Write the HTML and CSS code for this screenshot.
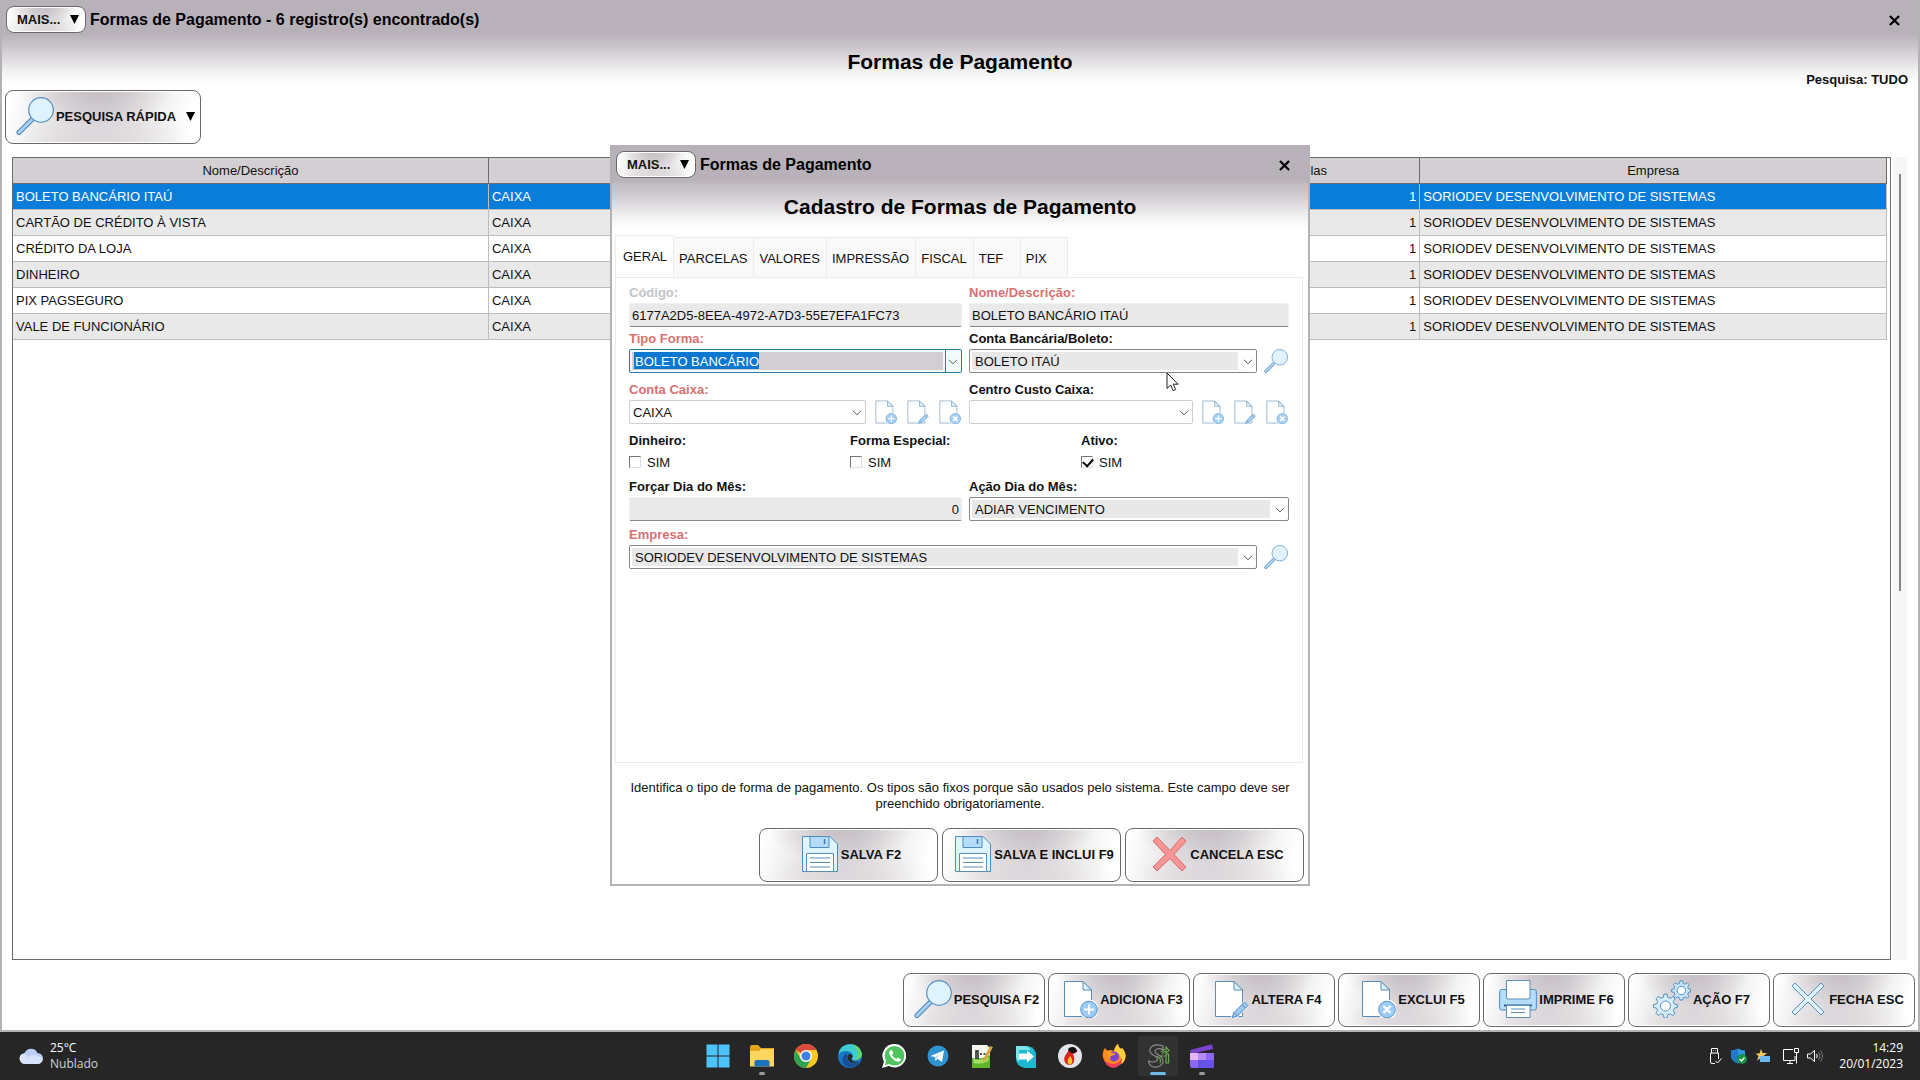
FILE: index.html
```
<!DOCTYPE html>
<html lang="pt-BR">
<head>
  <meta charset="UTF-8" />
  <meta name="viewport" content="width=device-width, initial-scale=1.0" />
  <title>Formas de Pagamento</title>
  <link rel="stylesheet" href="styles.css">
</head>
<body>
  <!-- Icons -->
  <svg class="sprite" aria-hidden="true">
    <symbol id="i-search" viewBox="0 0 38 38">
      <path d="M16.5 22 3 35.500" stroke="#4f86b8" stroke-width="5" stroke-linecap="round"/>
      <path d="M16.500 22 3 35.500" stroke="#a6d0f7" stroke-width="3" stroke-linecap="round"/>
      <circle cx="25" cy="13" r="12.300" fill="#def3fe" stroke="#5590c4" stroke-width="1.200"/>
    </symbol>
    <symbol id="i-doc" viewBox="0 0 38 38">
      <path d="M4.500 1.500H23L31.500 10V36.500H4.500Z" fill="#fff" stroke="#5c8db5"/>
      <path d="M23 1.500V10h8.500Z" fill="#d8f1fd" stroke="#5c8db5"/>
    </symbol>
    <symbol id="i-add" viewBox="0 0 38 38">
      <use href="#i-doc"/>
      <circle cx="29" cy="29.500" r="10" fill="#fff"/>
      <circle cx="29" cy="29.500" r="8.300" fill="#9cccf6" stroke="#5a94c8"/>
      <path d="M29 24.500v10M24 29.500h10" stroke="#fff" stroke-width="2"/>
    </symbol>
    <symbol id="i-edit" viewBox="0 0 38 38">
      <use href="#i-doc"/>
      <path d="M19 39 22 32 33 21 38 26 27 37Z" fill="#fff"/>
      <path d="M21 37.500 23 32.500 33.500 22 37 25.500 26.500 36ZM31 24.500l3.500 3.500M23 32.500l3.500 3.500" fill="#9cccf6" stroke="#4f86b8"/>
    </symbol>
    <symbol id="i-del" viewBox="0 0 38 38">
      <use href="#i-doc"/>
      <circle cx="29" cy="29.500" r="10" fill="#fff"/>
      <circle cx="29" cy="29.500" r="8.300" fill="#9cccf6" stroke="#5a94c8"/>
      <path d="m25.500 26 7 7m0-7-7 7" stroke="#fff" stroke-width="2.400"/>
    </symbol>
    <symbol id="i-print" viewBox="0 0 38 38">
      <rect x=".6" y="9.500" width="36.800" height="20.500" rx="2" fill="#b4dcfb" stroke="#4f8cc4"/>
      <path d="M7.500.500h23.500V17q0 2-2 2H9.500q-2 0-2-2Z" fill="#fff" stroke="#5c8db5"/>
      <path d="M5 25.500h28" stroke="#2f5f8f" stroke-width="2"/>
      <path d="M7.500 25.500h23.500v12H7.500Z" fill="#fff" stroke="#5c8db5"/>
      <path d="M12 29h14M12 32.500h14" stroke="#5c8db5"/>
    </symbol>
    <symbol id="i-gears" viewBox="0 0 38 38">
      <g fill="#d8eefc" stroke="#5590c4">
        <path d="M11 14h3l.6 3.200 2.600 1.100 2.700-1.800 2.200 2.200-1.800 2.700 1.100 2.600 3 .5v3l-3 .6-1.100 2.600 1.800 2.700-2.200 2.100-2.700-1.700-2.600 1-.6 3.200h-3l-.6-3.200-2.600-1-2.700 1.700-2.100-2.100 1.700-2.700-1.100-2.600-3.100-.6v-3l3.100-.5 1.100-2.600-1.700-2.700L5.100 16.500l2.700 1.800 2.600-1.100Z"/>
        <circle cx="12.500" cy="26" r="5" fill="#fff"/>
        <path d="M27 .8h2.600l.5 2.500 2 .9 2.200-1.400 1.800 1.800-1.400 2.200.9 2 1.900.5v2.500l-1.900.5-.9 2 1.400 2.200-1.800 1.800-2.200-1.400-2 .9-.5 2.300H27l-.5-2.300-2-.9-2.200 1.400-1.800-1.800 1.400-2.200-.9-2-2.400-.5V9.300l2.400-.5.9-2-1.400-2.200 1.800-1.800 2.200 1.400 2-.9Z" fill="#c6e4fb"/>
        <circle cx="28.300" cy="10.500" r="4.200" fill="#fff"/>
      </g>
    </symbol>
    <symbol id="i-close" viewBox="0 0 38 38">
      <path d="M3 6 6 3 19 16 32 3l3 3L22 19 35 32l-3 3L19 22 6 35l-3-3L16 19Z" fill="#def3fe" stroke="#5590c4"/>
    </symbol>
    <symbol id="i-cancel" viewBox="0 0 38 38">
      <path d="M3 6 7 2 20 15.500 32 2l4 4L24 19.500 36 32l-4 4L20 23.500 7 36l-4-4L15.500 19.500Z" fill="#fb9494" stroke="#d96a6a"/>
    </symbol>
    <symbol id="i-save" viewBox="0 0 38 38">
      <path d="M1.500 1.500H29L36.500 9V36.500h-35Z" fill="#def4ff" stroke="#4f8cc4"/>
      <path d="M9 1.500h19v11H9Z" fill="#b4dcfb" stroke="#4f8cc4"/>
      <path d="M23.500 4v5" stroke="#3f78b0" stroke-width="1.500"/>
      <path d="M5.500 18.500h27v18h-27Z" fill="#fff" stroke="#5c8db5"/>
      <path d="M9 23h20M9 27.500h20M9 32h20" stroke="#5c8db5"/>
    </symbol>
    <symbol id="i-x" viewBox="0 0 12 12">
      <path d="m1 1 10 10M11 1 1 11" stroke="#000" stroke-width="2.400"/>
    </symbol>
    <symbol id="i-down" viewBox="0 0 10 10">
      <path d="M0 0h10L5 10Z" fill="#000"/>
    </symbol>
    <symbol id="i-chevron" viewBox="0 0 10 6">
      <path d="m1 .8 4 4 4-4" fill="none" stroke="#555"/>
    </symbol>
  </svg>

  <main class="window">
    <header class="titlebar">
      <button class="btn more" type="button">MAIS...<svg class="arrow"><use href="#i-down"/></svg></button>
      <span class="caption">Formas de Pagamento - 6 registro(s) encontrado(s)</span>
      <button class="close" type="button" aria-label="Fechar"><svg><use href="#i-x"/></svg></button>
    </header>
    <div class="heading">
      <h1>Formas de Pagamento</h1>
      <span class="filter">Pesquisa: TUDO</span>
    </div>

    <div class="quick">
      <button class="btn big" type="button"><svg class="icon"><use href="#i-search"/></svg>PESQUISA RÁPIDA<svg class="arrow"><use href="#i-down"/></svg></button>
    </div>

    <section class="list">
      <div class="grid-box">
        <table>
          <colgroup><col class="c-name"><col class="c-account"><col class="c-parts"><col></colgroup>
          <thead>
            <tr><th>Nome/Descrição</th><th></th><th>Parcelas</th><th>Empresa</th></tr>
          </thead>
          <tbody>
            <tr class="selected"><td>BOLETO BANCÁRIO ITAÚ</td><td>CAIXA</td><td class="num">1</td><td>SORIODEV DESENVOLVIMENTO DE SISTEMAS</td></tr>
            <tr><td>CARTÃO DE CRÉDITO À VISTA</td><td>CAIXA</td><td class="num">1</td><td>SORIODEV DESENVOLVIMENTO DE SISTEMAS</td></tr>
            <tr><td>CRÉDITO DA LOJA</td><td>CAIXA</td><td class="num">1</td><td>SORIODEV DESENVOLVIMENTO DE SISTEMAS</td></tr>
            <tr><td>DINHEIRO</td><td>CAIXA</td><td class="num">1</td><td>SORIODEV DESENVOLVIMENTO DE SISTEMAS</td></tr>
            <tr><td>PIX PAGSEGURO</td><td>CAIXA</td><td class="num">1</td><td>SORIODEV DESENVOLVIMENTO DE SISTEMAS</td></tr>
            <tr><td>VALE DE FUNCIONÁRIO</td><td>CAIXA</td><td class="num">1</td><td>SORIODEV DESENVOLVIMENTO DE SISTEMAS</td></tr>
          </tbody>
        </table>
      </div>
      <div class="scroll"><div class="thumb"></div></div>
    </section>

    <footer class="actions">
      <button class="btn big" type="button"><svg class="icon"><use href="#i-search"/></svg>PESQUISA F2</button>
      <button class="btn big" type="button"><svg class="icon"><use href="#i-add"/></svg>ADICIONA F3</button>
      <button class="btn big" type="button"><svg class="icon"><use href="#i-edit"/></svg>ALTERA F4</button>
      <button class="btn big" type="button"><svg class="icon"><use href="#i-del"/></svg>EXCLUI F5</button>
      <button class="btn big" type="button"><svg class="icon"><use href="#i-print"/></svg>IMPRIME F6</button>
      <button class="btn big" type="button"><svg class="icon"><use href="#i-gears"/></svg>AÇÃO F7</button>
      <button class="btn big" type="button"><svg class="icon"><use href="#i-close"/></svg>FECHA ESC</button>
    </footer>

    <!-- Cadastro -->
    <div class="overlay">
      <div class="modal" role="dialog" aria-labelledby="modalTitle">
        <header class="titlebar">
          <button class="btn more" type="button">MAIS...<svg class="arrow"><use href="#i-down"/></svg></button>
          <span class="caption">Formas de Pagamento</span>
          <button class="close" type="button" aria-label="Fechar"><svg><use href="#i-x"/></svg></button>
        </header>
        <h2 id="modalTitle">Cadastro de Formas de Pagamento</h2>

        <div class="tabs" role="tablist">
          <button class="tab active" type="button" role="tab" aria-selected="true">GERAL</button>
          <button class="tab" type="button" role="tab">PARCELAS</button>
          <button class="tab" type="button" role="tab">VALORES</button>
          <button class="tab" type="button" role="tab">IMPRESSÃO</button>
          <button class="tab" type="button" role="tab">FISCAL</button>
          <button class="tab" type="button" role="tab">TEF</button>
          <button class="tab" type="button" role="tab">PIX</button>
        </div>

        <form class="panel">
          <div class="row tight">
            <div class="field">
              <label class="off" for="codigo">Código:</label>
              <input class="text" id="codigo" type="text" value="6177A2D5-8EEA-4972-A7D3-55E7EFA1FC73" readonly>
            </div>
            <div class="field">
              <label class="req" for="nome">Nome/Descrição:</label>
              <input class="text" id="nome" type="text" value="BOLETO BANCÁRIO ITAÚ">
            </div>
          </div>
          <div class="row">
            <div class="field">
              <label class="req" for="tipo">Tipo Forma:</label>
              <div class="combo current">
                <select id="tipo"><option>BOLETO BANCÁRIO</option></select>
                <svg><use href="#i-chevron"/></svg>
              </div>
            </div>
            <div class="field">
              <label for="boleto">Conta Bancária/Boleto:</label>
              <div class="line">
                <div class="combo">
                  <select id="boleto"><option>BOLETO ITAÚ</option></select>
                  <svg><use href="#i-chevron"/></svg>
                </div>
                <button class="mini" type="button" aria-label="Pesquisar"><svg><use href="#i-search"/></svg></button>
              </div>
            </div>
          </div>
          <div class="row">
            <div class="field">
              <label class="req" for="caixa">Conta Caixa:</label>
              <div class="line">
                <div class="combo plain">
                  <select id="caixa"><option>CAIXA</option></select>
                  <svg><use href="#i-chevron"/></svg>
                </div>
                <button class="mini" type="button" aria-label="Adicionar"><svg><use href="#i-add"/></svg></button>
                <button class="mini" type="button" aria-label="Alterar"><svg><use href="#i-edit"/></svg></button>
                <button class="mini" type="button" aria-label="Excluir"><svg><use href="#i-del"/></svg></button>
              </div>
            </div>
            <div class="field">
              <label for="centro">Centro Custo Caixa:</label>
              <div class="line">
                <div class="combo plain">
                  <select id="centro"><option></option></select>
                  <svg><use href="#i-chevron"/></svg>
                </div>
                <button class="mini" type="button" aria-label="Adicionar"><svg><use href="#i-add"/></svg></button>
                <button class="mini" type="button" aria-label="Alterar"><svg><use href="#i-edit"/></svg></button>
                <button class="mini" type="button" aria-label="Excluir"><svg><use href="#i-del"/></svg></button>
              </div>
            </div>
          </div>
          <div class="row mid checks">
            <div class="field">
              <span class="label">Dinheiro:</span>
              <label class="check"><input type="checkbox">SIM</label>
            </div>
            <div class="field">
              <span class="label">Forma Especial:</span>
              <label class="check"><input type="checkbox">SIM</label>
            </div>
            <div class="field">
              <span class="label">Ativo:</span>
              <label class="check"><input type="checkbox" checked>SIM</label>
            </div>
          </div>
          <div class="row mid">
            <div class="field">
              <label for="dia">Forçar Dia do Mês:</label>
              <input class="text num" id="dia" type="text" value="0">
            </div>
            <div class="field">
              <label for="acao">Ação Dia do Mês:</label>
              <div class="combo">
                <select id="acao"><option>ADIAR VENCIMENTO</option></select>
                <svg><use href="#i-chevron"/></svg>
              </div>
            </div>
          </div>
          <div class="field">
            <label class="req" for="empresa">Empresa:</label>
            <div class="line">
              <div class="combo">
                <select id="empresa"><option>SORIODEV DESENVOLVIMENTO DE SISTEMAS</option></select>
                <svg><use href="#i-chevron"/></svg>
              </div>
              <button class="mini" type="button" aria-label="Pesquisar"><svg><use href="#i-search"/></svg></button>
            </div>
          </div>
        </form>

        <p class="hint">Identifica o tipo de forma de pagamento. Os tipos são fixos porque são usados pelo sistema. Este campo deve ser preenchido obrigatoriamente.</p>

        <div class="modal-actions">
          <button class="btn big" type="button"><svg class="icon"><use href="#i-save"/></svg>SALVA F2</button>
          <button class="btn big" type="button"><svg class="icon"><use href="#i-save"/></svg>SALVA E INCLUI F9</button>
          <button class="btn big" type="button"><svg class="icon"><use href="#i-cancel"/></svg>CANCELA ESC</button>
        </div>

        <svg class="cursor" viewBox="0 0 13 20"><path d="M1 1v15.500l3.700-3.400 2.400 5.600 2.500-1.100-2.400-5.400h4.900Z" fill="#fff" stroke="#222"/></svg>
      </div>
    </div>
  </main>

  <!-- Barra de tarefas -->
  <div class="taskbar">
    <div class="weather">
      <svg viewBox="0 0 24 24">
        <path d="M6 20a5.500 5.500 0 0 1-.5-10.900A7 7 0 0 1 18.500 9 5.500 5.500 0 0 1 18.500 20Z" fill="#b9cdf5"/>
        <path d="M6 20a5.500 5.500 0 0 1-3.500-9.700q4-1 7 3 4-4 9-1 4 0 5 3a5.500 5.500 0 0 1-5 4.700Z" fill="#d6e3fb"/>
      </svg>
      <div><div>25°C</div><div class="dim">Nublado</div></div>
    </div>
    <div class="apps">
      <div class="app">
        <svg viewBox="0 0 24 24"><path d="M.5.5h11v11H.5Zm12 0h11v11h-11ZM.5 12.500h11v11H.5Zm12 0h11v11h-11Z" fill="#4cc3fb"/></svg>
      </div>
      <div class="app open">
        <svg viewBox="0 0 24 24">
          <path d="M0 3q0-2 2-2h6l3 3h13v17H0Z" fill="#e3a41c"/>
          <path d="M0 7h9l2-2h13v17.500H0Z" fill="#fcd660"/>
          <path d="M4.500 22.500V18q0-2 2-2h11q2 0 2 2v4.500Z" fill="#1c72b8"/>
        </svg>
      </div>
      <div class="app">
        <svg viewBox="0 0 24 24">
          <circle cx="12" cy="12" r="12" fill="#fbc926"/>
          <path d="M12 12 1.600 6A12 12 0 0 1 22.400 6H12Z" fill="#dc4a3c"/>
          <path d="M1.600 6A12 12 0 0 0 12 24l5.200-9H6.800Z" fill="#30a352"/>
          <circle cx="12" cy="12" r="6" fill="#fff"/>
          <circle cx="12" cy="12" r="4.500" fill="#3f7fe8"/>
        </svg>
      </div>
      <div class="app">
        <svg viewBox="0 0 24 24">
          <circle cx="12" cy="12" r="12" fill="#1b76c8"/>
          <path d="M1 8C4-2 20-3 23.500 9c1 5-3 7-7 7-3 0-3-1-2-2.500C16 10 12 7 8 7c-3 0-6 1-7 3Z" fill="#3fcbd0"/>
          <path d="M14 .2c6 1 9 4.800 9.800 9.500.5 4.300-3.300 6.300-7.300 6.300 5-3 4-12-2.500-15.800Z" fill="#62d66c"/>
          <path d="M9 13c0 6 7 9 13 5.500C18 25 8 25 5 19c-1.500-4 0-8 4-9.500Z" fill="#164f93"/>
          <path d="M14 14c-2 3 3 5.500 8.500 3.500C17 21.500 9.500 19 9.500 13c0-2 2-3.500 3.500-3 1.500.6 2 2.500 1 4Z" fill="#262626"/>
        </svg>
      </div>
      <div class="app">
        <svg viewBox="0 0 24 24">
          <path d="M12.500 0A11.700 11.700 0 0 1 12.500 23.500a12 12 0 0 1-5.700-1.500L0 24l2-6.500A11.700 11.700 0 0 1 12.500 0Z" fill="#fff"/>
          <circle cx="12.500" cy="11.700" r="9.800" fill="#4fc45c"/>
          <path d="m2.800 21.200 1.500-5 3.500 3.500Z" fill="#4fc45c"/>
          <path d="M8.500 6.300c-2 1.300-1.500 4.200.5 6.700s5 5 7.500 4.700c1.500-.2 2.500-1.500 2.300-2.700l-2.900-1.600-1.500 1.600c-2-.8-3.500-2.300-4.400-4.200l1.300-1.500L10 6.200Z" fill="#fff"/>
        </svg>
      </div>
      <div class="app">
        <svg viewBox="0 0 24 24">
          <circle cx="12" cy="12" r="10.500" fill="#2f93cf"/>
          <path d="m4.500 12 13.500-5.500-2 11.500-4.500-3.200-2.300 2.200-.4-4Z" fill="#fff"/>
          <path d="m8.800 13 6.500-4.300-4.800 5.300-1.300 3Z" fill="#b8d8ec"/>
        </svg>
      </div>
      <div class="app">
        <svg viewBox="0 0 24 24">
          <path d="M2 1h15l3 3v20H2Z" fill="#f2f6ec"/>
          <path d="M2 14q9 2 18-3v13H2Z" fill="#5fb52c"/>
          <path d="M3.500 15q8 2 15-2v4q-8 4-15 2Z" fill="#a5de62"/>
          <path d="M6 15V7h2v8m2-5h2m1.500 0h2" fill="none" stroke="#222" stroke-width="1.500"/>
          <path d="m13 16 7-14 3 1-7 13-3.500 2Z" fill="#d9a43a"/>
        </svg>
      </div>
      <div class="app">
        <svg viewBox="0 0 24 24">
          <path d="M2 2h12q8 2 8 9v13H11q-9-2-9-9Z" fill="#1cb9cf"/>
          <path d="M2 2h9q3 0 6 4H5v12q-3-2-3-5Z" fill="#7ee4ea"/>
          <path d="M5 9.500h8V6.500l7 6-7 6V15.500H5Z" fill="#fff"/>
        </svg>
      </div>
      <div class="app">
        <svg viewBox="0 0 24 24">
          <circle cx="12" cy="12" r="12" fill="#e2e6ea"/>
          <path d="M11 5c3-3 8-1 8 3l-4 2c2 4 2 10-3 11-5 0-7-5-5-9 1-2 3-4 4-7Z" fill="#d9261c"/>
          <path d="M10 5.500C12 2 18 2.500 18.500 6l1 1-3 2c-3 1-5-1-6.500-3.500Z" fill="#111"/>
          <path d="M12 12c3 3 3 8 0 8.500-3 0-3.500-4 0-8.500Z" fill="#fcc32c"/>
        </svg>
      </div>
      <div class="app">
        <svg viewBox="0 0 24 24">
          <path d="M3 4l2 2.500L9 6l3 1q1-5 4-7 0 3 3 5l1-1q4 4 3.500 9.500A11.500 11.500 0 0 1 1 13Q0 8 3 4Z" fill="#ff8a1e"/>
          <path d="M16 0q0 3 3 5l1-1q4 4 3.500 9.500-.8 4-3.500 6.500 1-9-8-13Q13 2 16 0Z" fill="#ffcf3a"/>
          <path d="M1 13q2 7 11 7 6-1 8-6-.5 9-8.500 10Q3 23 1 13Z" fill="#f43e5c"/>
          <circle cx="12" cy="12.500" r="5" fill="#7a45d0"/>
          <path d="M5 8q3-1 5 1 2 .5 4 0-2 3-5 3-2 2 0 4-4-2-4-8Z" fill="#ff9d22"/>
        </svg>
      </div>
      <div class="app active">
        <svg viewBox="0 0 24 24" fill="none">
          <path d="M17 2Q8-1 4.500 4 2 9 9 12q4 2 1.500 5Q7 19 2.500 17q1 7 9 6 8-3 4.500-9-1-2-5-4-4-3 0-5 3-1 6 1Z" stroke="#8a8d8a" stroke-width="1.200"/>
          <path d="M11 12q5 3 3 7M14 12h6v7M15 8q3-3 5-3V3l3 3.500L20 9V7q-2 0-4 3M20 19v-9h2.500v9Z" stroke="#69a84c" stroke-width="1.200"/>
        </svg>
      </div>
      <div class="app open">
        <svg viewBox="0 0 24 24">
          <path d="M0 6 21 .5q1.500 0 1.500 1.500l.5 3L1 10Z" fill="#7a44cf"/>
          <path d="M0 9h24v12.500q0 2.500-2 2.500H2q-2 0-2-2.500Z" fill="#8d68f2"/>
          <path d="M0 9h8v7H0Z" fill="#e3b5fb"/><path d="M8 9h8v7H8Z" fill="#b78bf8"/>
          <path d="M8 16h16v5.500q0 2.500-2 2.500H8Z" fill="#6653e6"/>
        </svg>
      </div>
    </div>
    <div class="tray">
      <svg viewBox="0 0 16 16" fill="none" stroke="#fff"><path d="M4.500 5V.5h6V5M6.500 2.500h.5M8 2.500h.5M8 15.500H5q-1.500 0-1.500-1.500V5h8v6M8.500 13l2 2 4-4.500"/></svg>
      <svg viewBox="0 0 16 16">
        <path d="M7 .5q3 2 7 2V8q0 5-7 7.500Q0 13 0 8V2.500q4 0 7-2Z" fill="#2d9ae0"/>
        <path d="M7 .5V15.500Q0 13 0 8V2.500q4 0 7-2Z" fill="#2078c8"/>
        <circle cx="11" cy="11" r="5" fill="#189044"/>
        <path d="m8.500 11 2 2 3-3.500" fill="none" stroke="#fff" stroke-width="1.300"/>
      </svg>
      <svg viewBox="0 0 16 16">
        <path d="m6 1 1.500 4H12L8.500 8 9 13 6 10l-4 2.500L3.500 8 .5 5.500h4Z" fill="#f0c860"/>
        <path d="M5 8h10v6H5Z" fill="#6db8f0"/>
      </svg>
      <svg class="net" viewBox="0 0 16 16" fill="none" stroke="#fff"><path d="M10 1.500H.5v11H12V8M4 15.500h6M7 12.500v3M11.500.5h4v4h-4ZM13.500 4.500V15.500"/></svg>
      <svg viewBox="0 0 16 16" fill="none" stroke="#fff"><path d="M.5 6h3l4-3.500v11L3.500 10h-3ZM9.500 6q1.500 2 0 4"/><path d="M11.500 4q3 4 0 8M13.500 2.500q4 5.500 0 11" stroke="#777"/></svg>
      <div class="clock"><div>14:29</div><div>20/01/2023</div></div>
    </div>
  </div>
</body>
</html>
```
FILE: styles.css
```
* {
  box-sizing: border-box;
}
html, body {
  margin: 0;
  height: 100%;
}
body {
  display: flex;
  flex-direction: column;
  overflow: hidden;
  font-family: "Liberation Sans", Arial, sans-serif;
  font-size: 13px;
  color: #111;
  background: #262626;
}
button, input, select {
  font: inherit;
  color: inherit;
}
h1, h2, p {
  margin: 0;
}
svg {
  display: block;
  flex: none;
}
.sprite {
  position: absolute;
  width: 0;
  height: 0;
}

/* windows */
.window, .modal {
  display: flex;
  flex-direction: column;
  position: relative;
  border: 2px solid #b5b2b5;
  border-top: none;
  background: #fff linear-gradient(#b9b1ba 0, #b9b1ba 34px, #d6d2d6 54px, #f3f2f3 72px, #fff 84px);
}
.window {
  flex: 1;
  min-height: 0;
}
.titlebar {
  display: flex;
  align-items: center;
  height: 38px;
  padding: 1px 18px 0 4px;
  font-size: 16px;
  font-weight: bold;
  color: #000;
}
.caption {
  flex: 1;
  margin-left: 4px;
  line-height: 19px;
}
.close {
  padding: 2px 0 0;
  border: none;
  background: none;
  cursor: pointer;
}
.close svg {
  width: 11px;
  height: 11px;
}
.heading {
  display: grid;
  grid-template-columns: 1fr auto 1fr;
  height: 52px;
}
h1, h2 {
  font-size: 21px;
  line-height: 24px;
  color: #000;
}
.heading h1 {
  grid-column: 2;
  padding-top: 12px;
}
.filter {
  align-self: end;
  justify-self: end;
  padding: 0 10px 2px 0;
  font-weight: bold;
  line-height: 16px;
}

/* buttons */
.btn {
  display: flex;
  align-items: center;
  justify-content: center;
  border: 1px solid #6b686b;
  border-radius: 8px;
  background:
    radial-gradient(ellipse 40% 70% at 46% 0, #c6bfc4 0, rgba(198, 191, 196, 0) 100%),
    radial-gradient(ellipse 45% 80% at 52% 100%, #dcd8db 0, rgba(220, 216, 219, 0) 100%),
    linear-gradient(105deg, #fff 3%, #e6e3e5 30%, #d9d4d8 50%, #efedee 72%, #fff 92%);
  box-shadow: inset 0 0 0 1px #fff;
  font-size: 13px;
  font-weight: bold;
  color: #111;
  white-space: nowrap;
  cursor: pointer;
}
.btn.big {
  height: 54px;
  padding: 0 1px 2px 6px;
}
.btn .icon {
  width: 38px;
  height: 38px;
  margin-right: 2px;
}
.btn .arrow {
  width: 9px;
  height: 9px;
}
.btn.more {
  height: 27px;
  width: 80px;
  padding: 0 6px 0 10px;
  justify-content: space-between;
}
.quick {
  display: flex;
  padding-left: 3px;
}
.quick .btn {
  width: 196px;
}
.quick .arrow {
  margin-left: 10px;
}

/* list */
.list {
  display: flex;
  flex: 1;
  gap: 2px;
  min-height: 0;
  margin: 13px 11px 13px 10px;
}
.grid-box {
  flex: 1;
  border: 1px solid #6e6b6e;
  padding-right: 3px;
}
table {
  width: 100%;
  table-layout: fixed;
  border-collapse: separate;
  border-spacing: 0;
}
.c-name { width: 25.4%; }
.c-account { width: 37.1%; }
.c-parts { width: 12.6%; }
th, td {
  height: 26px;
  padding: 0 3px;
  border-right: 1px solid #bdbdbd;
  border-bottom: 1px solid #bdbdbd;
}
th {
  background: #d4cfd3;
  border-color: #6e6b6e;
  font-weight: normal;
}
tbody tr:nth-child(even) {
  background: #e9e9e9;
}
tr.selected {
  background: #0a7ddb;
  color: #fff;
}
.num {
  text-align: right;
}
.scroll {
  width: 14px;
  padding-top: 17px;
  background: #f6f6f6;
}
.thumb {
  width: 2px;
  height: 53%;
  margin-left: 6px;
  background: #858585;
}
.actions {
  display: flex;
  justify-content: flex-end;
  gap: 3px;
  padding: 0 3px 3px;
}
.actions .btn {
  width: 142px;
}

/* modal */
.overlay {
  position: absolute;
  inset: 0;
  display: grid;
  place-items: center;
  padding-top: 1px;
}
.modal {
  width: 700px;
}
.modal h2 {
  padding: 12px 0 16px;
  text-align: center;
}
.tabs {
  display: flex;
  align-items: flex-end;
  margin-left: 3px;
}
.tab {
  height: 40px;
  min-width: 47px;
  padding: 2px 6px 0 5px;
  border: 1px solid #ececec;
  border-width: 1px 1px 0 0;
  background: #f9f9f9;
  text-align: left;
}
.tab.active {
  height: 42px;
  padding: 0 6px 0 7px;
  border-left-width: 1px;
  background: #fff;
}
.panel {
  min-height: 486px;
  margin: 0 5px 0 3px;
  padding: 7px 13px 0 13px;
  border: 1px solid #ececec;
}
.row {
  display: grid;
  grid-template-columns: 333fr 320fr;
  gap: 7px;
  margin-bottom: 9px;
}
.row.tight {
  margin-bottom: 4px;
}
.row.mid {
  margin-bottom: 6px;
}
.row.checks {
  grid-template-columns: 214px 224px 1fr;
}
.field {
  display: flex;
  flex-direction: column;
  gap: 2px;
  min-width: 0;
}
.field > label:not(.check), .label {
  font-weight: bold;
  line-height: 16px;
}
.field > label.req { color: #d9706f; }
.field > label.off { color: #c4c4c4; }
.text {
  width: 100%;
  height: 24px;
  padding: 0 2px;
  border: 1px solid #f0f0f0;
  border-bottom-color: #868686;
  border-radius: 2px;
  background: #e9e9e9;
}
.line {
  display: flex;
  align-items: center;
  gap: 6px;
}
.combo {
  flex: 1;
  position: relative;
}
.combo select {
  display: block;
  width: 100%;
  height: 24px;
  padding: 0 24px 0 5px;
  border: 1px solid #868686;
  border-radius: 2px;
  appearance: none;
  background: #fff linear-gradient(#e8e8e8, #e8e8e8) 2px 2px / calc(100% - 20px) calc(100% - 4px) no-repeat;
}
.combo svg {
  position: absolute;
  right: 4px;
  top: 10px;
  width: 10px;
  height: 6px;
}
.combo.plain select {
  padding-left: 3px;
  border-color: #cfcfcf;
  background: #fff;
}
.combo.current select {
  border-color: #2a7ba8;
  color: #fff;
  background:
    linear-gradient(#0a78d0, #0a78d0) 4px 2px / 125px 17px no-repeat,
    linear-gradient(#d3ced2, #d3ced2) 2px 2px / calc(100% - 20px) calc(100% - 4px) no-repeat,
    linear-gradient(#2a7ba8, #2a7ba8) calc(100% - 15px) 0 / 1px 100% no-repeat,
    #f3fbff;
}
.combo.current select option {
  color: #111;
}
.mini {
  width: 26px;
  padding: 0 1px;
  border: none;
  background: none;
  cursor: pointer;
}
.mini svg {
  width: 24px;
  height: 24px;
  opacity: 0.9;
}
.check {
  display: flex;
  align-items: center;
  gap: 6px;
  height: 22px;
}
.check input {
  width: 12px;
  height: 12px;
  margin: 0;
  appearance: none;
  border: 1px solid #e0e0e0;
  border-top-color: #777;
  border-left-color: #777;
  background: #fff;
}
.check input:checked::before {
  content: "";
  display: block;
  width: 8px;
  height: 5px;
  margin: 1px;
  border: solid #000;
  border-width: 0 0 2px 2px;
  transform: rotate(-48deg);
}
.hint {
  padding: 17px 14px 16px;
  line-height: 16px;
  text-align: center;
}
.modal-actions {
  display: flex;
  justify-content: flex-end;
  gap: 4px;
  padding: 0 4px 2px;
}
.modal-actions .btn {
  width: 179px;
}
.cursor {
  position: absolute;
  left: 554px;
  top: 227px;
  width: 13px;
  height: 20px;
}

/* taskbar */
.taskbar {
  display: grid;
  grid-template-columns: 1fr auto 1fr;
  align-items: center;
  height: 48px;
  background: #262626;
  color: #fff;
  font-family: "Open Sans", "Noto Sans", sans-serif;
  font-size: 12px;
  line-height: 16px;
}
.weather {
  display: flex;
  align-items: center;
  gap: 7px;
  padding-left: 19px;
}
.weather svg {
  width: 24px;
  height: 24px;
}
.dim {
  color: #d0d0d0;
}
.apps {
  display: flex;
  gap: 4px;
}
.app {
  position: relative;
  display: grid;
  place-items: center;
  width: 40px;
  height: 40px;
}
.app svg {
  width: 24px;
  height: 24px;
}
.app.open::after, .app.active::after {
  content: "";
  position: absolute;
  bottom: 1px;
  left: 17px;
  width: 6px;
  height: 3px;
  border-radius: 2px;
  background: #9c9c9c;
}
.app.active {
  border-radius: 4px;
  background: #323232;
}
.app.active::after {
  left: 12px;
  width: 16px;
  background: #6db9e6;
}
.tray {
  display: flex;
  align-items: center;
  justify-content: flex-end;
  gap: 8px;
  padding-right: 17px;
}
.tray svg {
  width: 16px;
  height: 16px;
}
.net {
  margin-left: 4px;
}
.clock {
  margin-left: 8px;
  text-align: right;
}
```
